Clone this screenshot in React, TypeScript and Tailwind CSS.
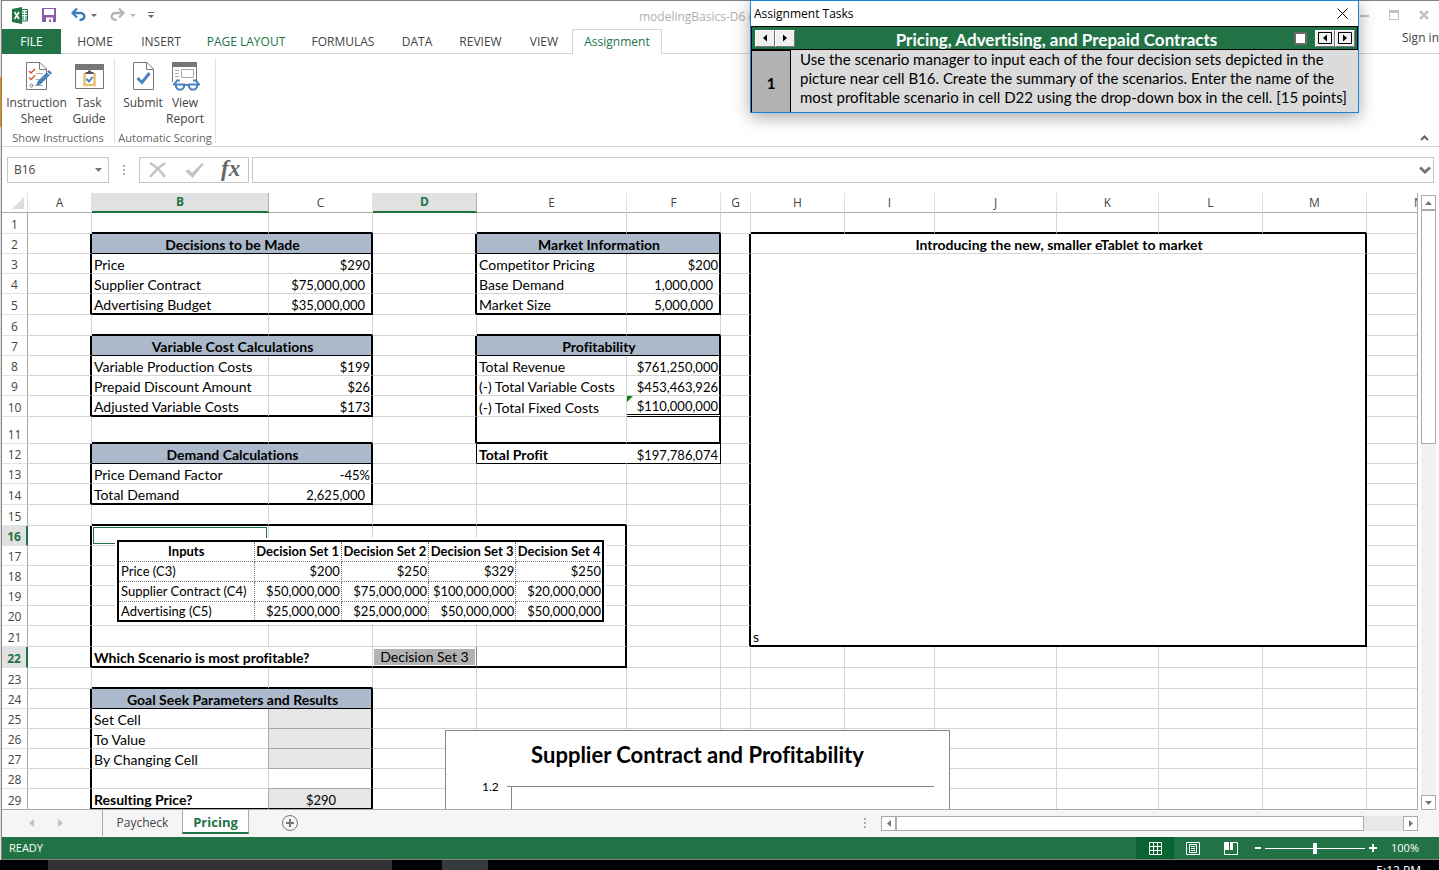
import { useState } from 'react';
import type { ReactNode } from 'react';
import { twMerge } from 'tailwind-merge';

type Cell = {
  text?: ReactNode;
  span?: number;
  rows?: number;
  cls?: string;
};

type Box = { top: number; bottom: number; left: string; right: string };

const COLUMNS = 'ABCDEFGHIJKLMN'.split('');

const COLUMN_WIDTHS = [
  'w-[26px]',
  'w-[64px]',
  'w-[177px]',
  'w-[104px]',
  'w-[104px]',
  'w-[150px]',
  'w-[94px]',
  'w-[30px]',
  'w-[94px]',
  'w-[90px]',
  'w-[122px]',
  'w-[102px]',
  'w-[104px]',
  'w-[104px]',
  '',
];

const SELECTED_COLUMNS = ['B', 'D'];
const SELECTED_ROWS = [16, 22];

// rows that are not the default 20px tall
const ROW_HEIGHTS: Record<number, string> = {
  1: 'h-[21px]',
  5: 'h-[21px]',
  6: 'h-[21px]',
  10: 'h-[21px]',
  11: 'h-[27px]',
  14: 'h-[21px]',
  15: 'h-[21px]',
  21: 'h-[21px]',
  22: 'h-[21px]',
  23: 'h-[21px]',
  29: 'h-[21px]',
};

const BOXES: Box[] = [
  { top: 2, bottom: 5, left: 'B', right: 'C' },
  { top: 7, bottom: 10, left: 'B', right: 'C' },
  { top: 12, bottom: 14, left: 'B', right: 'C' },
  { top: 24, bottom: 29, left: 'B', right: 'C' },
  { top: 2, bottom: 5, left: 'E', right: 'F' },
  { top: 7, bottom: 11, left: 'E', right: 'F' },
  { top: 2, bottom: 21, left: 'H', right: 'M' },
  { top: 16, bottom: 22, left: 'B', right: 'E' },
];

const heading = (text: string): Cell => ({
  text,
  span: 2,
  cls: 'bg-[#acb9ca] text-center font-bold border-b-black',
});
const num = (text: ReactNode): Cell => ({ text, cls: 'pr-px text-right text-[13px]' });
const accounting = (text: string): Cell => ({ text, cls: 'text-right text-[13px] pr-[6px]' });
const input = (text = ''): Cell => ({
  text,
  cls: 'bg-[#e7e6e6] text-center text-[13px] border-b-[#a6a6a6]',
});

const CELLS: Record<string, Cell> = {
  B2: heading('Decisions to be Made'),
  B3: { text: 'Price' },
  C3: num('$290'),
  B4: { text: 'Supplier Contract' },
  C4: accounting('$75,000,000'),
  B5: { text: 'Advertising Budget' },
  C5: accounting('$35,000,000'),
  B7: heading('Variable Cost Calculations'),
  B8: { text: 'Variable Production Costs' },
  C8: num('$199'),
  B9: { text: 'Prepaid Discount Amount' },
  C9: num('$26'),
  B10: { text: 'Adjusted Variable Costs' },
  C10: num('$173'),
  B12: heading('Demand Calculations'),
  B13: { text: 'Price Demand Factor' },
  C13: num('-45%'),
  B14: { text: 'Total Demand' },
  C14: accounting('2,625,000'),
  E2: heading('Market Information'),
  E3: { text: 'Competitor Pricing' },
  F3: num('$200'),
  E4: { text: 'Base Demand' },
  F4: accounting('1,000,000'),
  E5: { text: 'Market Size' },
  F5: accounting('5,000,000'),
  E7: heading('Profitability'),
  E8: { text: 'Total Revenue' },
  F8: num('$761,250,000'),
  E9: { text: '(-) Total Variable Costs' },
  F9: num('$453,463,926'),
  E10: { text: '(-) Total Fixed Costs' },
  F10: {
    text: (
      <>
        <span className="absolute left-0 top-0 border-r-[6px] border-t-[6px] border-r-transparent border-t-[#107c10]" />
        $110,000,000
      </>
    ),
    cls: 'relative pr-px text-right text-[13px] border-b-[3px] border-b-black [border-bottom-style:double]',
  },
  D12: { cls: 'border-r-black' },
  E12: { text: 'Total Profit', cls: 'font-bold border-r-white border-b-black' },
  F12: { text: '$197,786,074', cls: 'pr-[2px] text-right text-[13px] border-r-black border-b-black' },
  H2: {
    text: 'Introducing the new, smaller eTablet to market',
    span: 6,
    cls: 'text-center font-bold',
  },
  H3: { text: 's', span: 6, rows: 19 },
  B16: { text: <div className="m-px h-[17px] border border-[#217346]" />, cls: 'p-0' },
  B22: { text: 'Which Scenario is most profitable?', span: 2, cls: 'font-bold' },
  D22: {
    text: <div className="h-[18px] border border-white bg-[#b2b2b2] text-center">Decision Set 3</div>,
    cls: 'p-0 border-r-[#808080]',
  },
  B24: heading('Goal Seek Parameters and Results'),
  B25: { text: 'Set Cell', cls: 'border-r-[#a6a6a6]' },
  C25: input(),
  B26: { text: 'To Value', cls: 'border-r-[#a6a6a6]' },
  C26: input(),
  B27: { text: 'By Changing Cell', cls: 'border-r-[#a6a6a6]' },
  C27: input(),
  C28: { cls: 'border-b-[#a6a6a6]' },
  B29: { text: 'Resulting Price?', cls: 'font-bold border-r-[#a6a6a6]' },
  C29: input('$290'),
};

const SCENARIOS = [
  ['Price (C3)', '$200', '$250', '$329', '$250'],
  ['Supplier Contract (C4)', '$50,000,000', '$75,000,000', '$100,000,000', '$20,000,000'],
  ['Advertising (C5)', '$25,000,000', '$25,000,000', '$50,000,000', '$50,000,000'],
];

const RIBBON_TABS = [
  { label: 'HOME', width: 'w-[66px]' },
  { label: 'INSERT', width: 'w-[66px]' },
  { label: 'PAGE LAYOUT', width: 'w-[104px]' },
  { label: 'FORMULAS', width: 'w-[90px]' },
  { label: 'DATA', width: 'w-[58px]' },
  { label: 'REVIEW', width: 'w-[69px]' },
  { label: 'VIEW', width: 'w-[58px]' },
];

// medium borders sit on the right and bottom edges of the cells around a box
function boxBorders(row: number, lastRow: number, col: number, lastCol: number) {
  const classes: string[] = [];
  for (const box of BOXES) {
    const left = COLUMNS.indexOf(box.left);
    const right = COLUMNS.indexOf(box.right);
    if (row >= box.top && row <= box.bottom && (lastCol === right || lastCol === left - 1)) {
      classes.push('border-r-2 border-r-black');
    }
    if (col >= left && col <= right && (lastRow === box.bottom || lastRow === box.top - 1)) {
      classes.push('border-b-2 border-b-black');
    }
  }
  return classes.join(' ');
}

function SheetRow({ row }: { row: number }) {
  const cells: ReactNode[] = [];
  const selected = SELECTED_ROWS.includes(row);

  for (let col = 0; col < COLUMNS.length; col++) {
    // H3:M21 is one merged cell
    if (row > 3 && row <= 21 && col >= 7 && col <= 12) continue;
    const cell = CELLS[COLUMNS[col] + row] ?? {};
    const lastCol = col + (cell.span ?? 1) - 1;
    const lastRow = row + (cell.rows ?? 1) - 1;
    cells.push(
      <td
        key={col}
        colSpan={cell.span}
        rowSpan={cell.rows}
        className={twMerge(
          'overflow-hidden whitespace-nowrap border-b border-r border-[#d4d4d4] p-0 pl-[2px] align-bottom',
          cell.cls,
          boxBorders(row, lastRow, col, lastCol),
          row === 10 && col === 5 && 'border-b-[3px]',
        )}
      >
        {cell.text}
      </td>,
    );
    col = lastCol;
  }

  return (
    <tr className={ROW_HEIGHTS[row] ?? 'h-[20px]'}>
      <th
        scope="row"
        className={twMerge(
          "border-b border-r border-b-[#e3e3e3] border-r-[#ababab] p-0 text-center align-bottom font-['Open_Sans',sans-serif] text-[12px] font-normal text-[#444]",
          selected && 'border-r-2 border-r-[#217346] bg-[#e1e1e1] font-bold text-[#217346]',
        )}
      >
        {row}
      </th>
      {cells}
    </tr>
  );
}

function ScenarioPicture() {
  return (
    <div className="absolute left-[113px] top-[345px] w-[491px] bg-white p-[2px]">
      <table className="w-full table-fixed border-collapse border-2 border-black text-[13px] leading-4">
        <colgroup>
          <col className="w-[136px]" />
          <col span={4} />
        </colgroup>
        <thead>
          <tr className="h-[20px]">
            <th className="border border-dotted border-[#777] p-0 font-bold">Inputs</th>
            {[1, 2, 3, 4].map((n) => (
              <th key={n} className="whitespace-nowrap border border-dotted border-[#777] p-0 font-bold">
                Decision Set {n}
              </th>
            ))}
          </tr>
        </thead>
        <tbody>
          {SCENARIOS.map(([label, ...values]) => (
            <tr key={label} className="h-[20px]">
              <td className="whitespace-nowrap border border-dotted border-[#777] p-0 pl-[2px]">{label}</td>
              {values.map((value, i) => (
                <td key={i} className="whitespace-nowrap border border-dotted border-[#777] p-0 pr-px text-right">
                  {value}
                </td>
              ))}
            </tr>
          ))}
        </tbody>
      </table>
    </div>
  );
}

function ContractChart() {
  return (
    <div className="absolute left-[443px] top-[537px] h-[300px] w-[505px] border border-[#868686] bg-white">
      <h2 className="pt-[10px] text-center text-[22px] font-bold leading-7">Supplier Contract and Profitability</h2>
      <div className="flex pl-[36px] pt-[8px]">
        <span className="w-[23px] text-[12px] leading-5">1.2</span>
        <svg width="432" height="240" viewBox="0 0 432 240" fill="none" stroke="#868686">
          <path d="M2 9.5H429M6.5 9.5V240" />
        </svg>
      </div>
    </div>
  );
}

function Sheet() {
  return (
    <div className="flex min-h-0 flex-1">
      <div className="relative min-w-0 flex-1 overflow-hidden border-b border-r border-[#ababab]">
        <table className="w-full min-w-[1469px] table-fixed border-separate border-spacing-0 font-[Lato,sans-serif] text-[14px] leading-4 text-black">
          <colgroup>
            {COLUMN_WIDTHS.map((width, i) => (
              <col key={i} className={width} />
            ))}
          </colgroup>
          <thead>
            <tr className="h-[20px]">
              <th className="border-b border-r border-b-[#ababab] border-r-[#e1e1e1] p-0">
                <svg className="ml-[10px]" width="13" height="12" viewBox="0 0 13 12">
                  <path d="M12 0V12H0Z" fill="#dcdcdc" />
                </svg>
              </th>
              {COLUMNS.map((name) => (
                <th
                  key={name}
                  scope="col"
                  className={twMerge(
                    "border-b border-r border-b-[#ababab] border-r-[#e1e1e1] p-0 text-center font-['Open_Sans',sans-serif] text-[12px] font-normal text-[#444]",
                    SELECTED_COLUMNS.includes(name) &&
                      'border-b-2 border-b-[#217346] border-r-[#ababab] bg-[#e1e1e1] font-bold text-[#217346]',
                  )}
                >
                  {name}
                </th>
              ))}
            </tr>
          </thead>
          <tbody>
            {Array.from({ length: 29 }, (_, i) => (
              <SheetRow key={i} row={i + 1} />
            ))}
          </tbody>
        </table>
        <div className="font-[Lato,sans-serif] text-black">
          <ScenarioPicture />
          <ContractChart />
        </div>
      </div>

      {/* Vertical scroll bar */}
      <div className="flex w-[21px] flex-col pl-[3px] pr-[3px] pt-[2px]">
        <button aria-label="Scroll up" className="flex h-[15px] items-center justify-center border border-[#ababab]">
          <svg width="7" height="4" viewBox="0 0 7 4"><path d="M0 4L3.5 0L7 4Z" fill="#777" /></svg>
        </button>
        <div className="flex-1 bg-[#f1f1f1]">
          <div className="h-[40%] border border-[#ababab] bg-white" />
        </div>
        <button aria-label="Scroll down" className="flex h-[15px] items-center justify-center border border-[#ababab]">
          <svg width="7" height="4" viewBox="0 0 7 4"><path d="M0 0L3.5 4L7 0Z" fill="#777" /></svg>
        </button>
      </div>
    </div>
  );
}

function TitleBar() {
  return (
    <header className="flex h-[28px] items-center pl-[10px]">
      <svg width="17" height="17" viewBox="0 0 17 17">
        <path d="M9 2.5H15.5V14H9" fill="#fff" stroke="#217346" />
        <path d="M10 5H12M10 7.500H12M10 10H12M10 12H12M13 5H15M13 7.500H15M13 10H15M13 12H15" stroke="#217346" />
        <path d="M0 2L10 0V17L0 15Z" fill="#217346" />
        <path d="M2.500 5L7 12M7 5L2.500 12" stroke="#fff" strokeWidth="1.600" />
      </svg>
      <button aria-label="Save" className="ml-[13px]">
        <svg width="14" height="14" viewBox="0 0 14 14">
          <path d="M0 0H14V14H0Z" fill="#8a5bab" />
          <path d="M2 1H12V7H2ZM4 9.500H11V14H9V11.500H7V14H4Z" fill="#fff" />
        </svg>
      </button>
      <button aria-label="Undo" className="ml-[15px] flex items-center gap-[5px]">
        <svg width="15" height="14" viewBox="0 0 15 14" fill="none" stroke="#3c78b8">
          <path d="M2 5H9.500C15 5.500 14.500 12 8.500 12" strokeWidth="2.400" />
          <path d="M6 0.500L1.500 5L6 9.500" strokeWidth="2.200" />
        </svg>
        <svg width="6" height="3" viewBox="0 0 6 3"><path d="M0 0H6L3 3Z" fill="#666" /></svg>
      </button>
      <button aria-label="Redo" className="ml-[13px] flex items-center gap-[5px]">
        <svg width="15" height="14" viewBox="0 0 15 14" fill="none" stroke="#b5b5b5">
          <path d="M13 5H5.500C0 5.500 0.500 12 6.500 12" strokeWidth="2.400" />
          <path d="M9 0.500L13.500 5L9 9.500" strokeWidth="2.200" />
        </svg>
        <svg width="6" height="3" viewBox="0 0 6 3"><path d="M0 0H6L3 3Z" fill="#b5b5b5" /></svg>
      </button>
      <button aria-label="Customize Quick Access Toolbar" className="ml-[12px]">
        <svg width="6" height="6" viewBox="0 0 6 6"><path d="M0 0H6V1H0ZM0 3H6L3 6Z" fill="#666" /></svg>
      </button>
      <span className="ml-[485px] whitespace-nowrap pt-[3px] text-[12px] text-[#b0b0b0]">modelingBasics-D6 (</span>
      <div className="ml-auto flex items-center gap-[20px] pr-[10px]">
        <svg width="9" height="10" viewBox="0 0 9 10"><path d="M0 5H9V7H0Z" fill="#c3c3c3" /></svg>
        <svg width="10" height="10" viewBox="0 0 10 10"><path d="M0 0H10V10H0ZM1 3V9H9V3Z" fill="#c3c3c3" fillRule="evenodd" /></svg>
        <svg width="10" height="10" viewBox="0 0 10 10"><path d="M1 1L9 9M9 1L1 9" stroke="#c3c3c3" strokeWidth="2.500" /></svg>
      </div>
    </header>
  );
}

function RibbonTabs() {
  return (
    <nav className="flex h-[25px] text-[12px] text-[#444]">
      <button className="w-[59px] bg-[#217346] text-white">FILE</button>
      {RIBBON_TABS.map((tab) => (
        <button
          key={tab.label}
          className={twMerge(
            'whitespace-nowrap border-b border-[#d4d4d4] pl-[2px] pt-px',
            tab.width,
            tab.label === 'PAGE LAYOUT' && 'text-[#217346]',
          )}
        >
          {tab.label}
        </button>
      ))}
      <button className="w-[90px] border border-b-0 border-[#d4d4d4] text-[#217346]">Assignment</button>
      <a href="#" className="flex-1 whitespace-nowrap border-b border-[#d4d4d4] text-right">Sign in</a>
    </nav>
  );
}

function RibbonButton({ icon, lines, width }: { icon: ReactNode; lines: string[]; width: string }) {
  return (
    <button className={twMerge('flex flex-col items-center text-[12px] leading-4 text-[#444]', width)}>
      {icon}
      {lines.map((line) => (
        <span key={line} className="whitespace-nowrap">{line}</span>
      ))}
    </button>
  );
}

function InstructionIcon() {
  return (
    <svg className="mb-[3px]" width="32" height="32" viewBox="0 0 32 32" fill="none">
      <path d="M5.500 2.500H19L25.500 9V29.500H5.500Z" fill="#fff" stroke="#777" />
      <path d="M18.500 2.500V9.500H25.500" stroke="#777" />
      <path d="M8 11L10 13L14 9M8 17.500L10 19.500L14 15.500" stroke="#d65532" strokeWidth="1.500" />
      <path d="M15 13.500H22M15 19.500H19M14 25.500H22" stroke="#aaa" />
      <circle cx="10.500" cy="25.500" r="1.500" stroke="#777" />
      <path d="M15 26L16.500 21.500L28 10L31 13L19.500 24.500Z" fill="#4a82bd" />
      <path d="M26 12L29 15" stroke="#fff" />
    </svg>
  );
}

function TaskIcon() {
  return (
    <svg className="mb-[3px]" width="32" height="32" viewBox="0 0 32 32" fill="none">
      <path d="M2.500 4.500H30.500V28.500H2.500Z" fill="#fff" stroke="#777" />
      <path d="M2 4H31V10H2Z" fill="#777" />
      <path d="M11.500 13V25H21.500V13" stroke="#e6c073" strokeWidth="2.500" />
      <path d="M12.500 14V12H15V10.500H18V12H20.500V14Z" fill="#555" />
      <path d="M13.500 19L16 21.500L19.500 17" stroke="#4a82bd" strokeWidth="2" />
    </svg>
  );
}

function SubmitIcon() {
  return (
    <svg className="mb-[3px]" width="32" height="32" viewBox="0 0 32 32" fill="none">
      <path d="M6.500 2.500H20L26.500 9V29.500H6.500Z" fill="#fff" stroke="#777" />
      <path d="M19.500 2.500V9.500H26.500" stroke="#777" />
      <path d="M10.500 18L15 22.500L22.500 13" stroke="#4a82bd" strokeWidth="3" />
    </svg>
  );
}

function ReportIcon() {
  return (
    <svg className="mb-[3px]" width="32" height="32" viewBox="0 0 32 32" fill="none">
      <path d="M3.500 22V4.500H27.500V20" stroke="#777" />
      <path d="M3 2H28V7H3Z" fill="#777" />
      <path d="M6 10.500H10M6 13.500H10M6 16.500H10" stroke="#aaa" />
      <path d="M12.500 9.500H24.500V17.500H12.500Z" stroke="#aaa" />
      <path d="M7 24.500H15V27L13 29.500H9L7 27ZM20 24.500H28V27L26 29.500H22L20 27ZM15 25H20" fill="#fff" stroke="#4a82bd" strokeWidth="2" />
      <path d="M4 24.500H7M28 24.500H31M5 25L8 20.500H11M30 25L27 20.500H24" stroke="#4a82bd" strokeWidth="2" />
    </svg>
  );
}

function Ribbon() {
  return (
    <section className="flex h-[93px] border-b border-[#d4d4d4] pt-[4px]">
      <div className="flex h-[85px] w-[113px] flex-col border-r border-[#e1e1e1] pt-[2px]">
        <div className="flex pl-[3px]">
          <RibbonButton width="w-[63px]" icon={<InstructionIcon />} lines={['Instruction', 'Sheet']} />
          <RibbonButton width="w-[42px]" icon={<TaskIcon />} lines={['Task', 'Guide']} />
        </div>
        <p className="whitespace-nowrap pt-[3px] text-center text-[11px] leading-4 text-[#666]">Show Instructions</p>
      </div>
      <div className="flex h-[85px] w-[101px] flex-col border-r border-[#e1e1e1] pt-[2px]">
        <div className="flex pl-[7px]">
          <RibbonButton width="w-[42px]" icon={<SubmitIcon />} lines={['Submit']} />
          <RibbonButton width="w-[42px]" icon={<ReportIcon />} lines={['View', 'Report']} />
        </div>
        <p className="whitespace-nowrap pt-[3px] text-center text-[11px] leading-4 text-[#666]">Automatic Scoring</p>
      </div>
      <button aria-label="Collapse the ribbon" className="ml-auto self-end pb-[5px] pr-[10px]">
        <svg width="9" height="6" viewBox="0 0 9 6" fill="none">
          <path d="M1 5L4.500 1.500L8 5" stroke="#666" strokeWidth="2" />
        </svg>
      </button>
    </section>
  );
}

function FormulaBar() {
  return (
    <section className="flex h-[46px] items-center pl-[5px] pr-[5px]">
      <div className="flex h-[26px] w-[102px] items-center border border-[#c6c6c6] pr-[6px]">
        <input aria-label="Name box" defaultValue="B16" className="w-0 flex-1 pl-[6px] text-[12px] text-[#444] outline-none" />
        <svg width="7" height="4" viewBox="0 0 7 4"><path d="M0 0H7L3.500 4Z" fill="#777" /></svg>
      </div>
      <svg className="ml-[14px]" width="2" height="10" viewBox="0 0 2 10">
        <path d="M0 0H2V2H0ZM0 4H2V6H0ZM0 8H2V10H0Z" fill="#ababab" />
      </svg>
      <div className="ml-[14px] flex h-[26px] w-[110px] items-center border border-[#c6c6c6] pl-[9px]">
        <button aria-label="Cancel">
          <svg width="18" height="16" viewBox="0 0 18 16" fill="none" stroke="#c3c3c3">
            <path d="M1 1C6 4 12 9 16 15" strokeWidth="2.600" />
            <path d="M16 1C10 5 5 10 1 15" strokeWidth="2.200" />
          </svg>
        </button>
        <button aria-label="Enter" className="ml-[18px]">
          <svg width="20" height="16" viewBox="0 0 20 16">
            <path d="M0 9L4 7.500L7 11L17 1L19 2L7.500 16Z" fill="#c3c3c3" />
          </svg>
        </button>
        <button
          aria-label="Insert function"
          className="ml-[16px] pb-[2px] font-['Liberation_Serif',serif] text-[23px] font-bold italic leading-6 text-[#666]"
        >
          fx
        </button>
      </div>
      <div className="ml-[3px] flex h-[26px] flex-1 items-center border border-[#c6c6c6] pr-[2px]">
        <input aria-label="Formula" className="min-w-0 flex-1 px-1 text-[12px] outline-none" />
        <svg width="12" height="8" viewBox="0 0 12 8" fill="none">
          <path d="M1 1.500L6 6L11 1.500" stroke="#777" strokeWidth="3" />
        </svg>
      </div>
    </section>
  );
}

function TabStrip() {
  return (
    <nav className="flex h-[27px] bg-[#f5f5f5] pb-px text-[12px] text-[#444]">
      <div className="flex w-[101px] items-center gap-[24px] border-r border-[#ababab] pl-[27px]">
        <svg width="5" height="8" viewBox="0 0 5 8"><path d="M5 0V8L0 4Z" fill="#c3c3c3" /></svg>
        <svg width="5" height="8" viewBox="0 0 5 8"><path d="M0 0V8L5 4Z" fill="#c3c3c3" /></svg>
      </div>
      <button className="w-[79px]">Paycheck</button>
      <button className="h-[24px] w-[67px] border-x border-b-2 border-x-[#ababab] border-b-[#217346] bg-white pt-[3px] text-[13px] font-bold text-[#217346]">
        Pricing
      </button>
      <button aria-label="New sheet" className="ml-[32px]">
        <svg width="18" height="18" viewBox="0 0 18 18" fill="none" stroke="#777">
          <circle cx="9" cy="9" r="7.500" />
          <path d="M5 9H13M9 5V13" strokeWidth="2" />
        </svg>
      </button>
      <div className="ml-auto flex w-[575px] items-center pr-[21px]">
        <svg className="mr-[15px]" width="2" height="10" viewBox="0 0 2 10">
          <path d="M0 0H2V2H0ZM0 4H2V6H0ZM0 8H2V10H0Z" fill="#ababab" />
        </svg>
        <button aria-label="Scroll left" className="flex h-[15px] w-[15px] items-center justify-center border border-[#ababab] bg-white">
          <svg width="4" height="7" viewBox="0 0 4 7"><path d="M4 0V7L0 3.500Z" fill="#777" /></svg>
        </button>
        <div className="h-[15px] flex-1 bg-[#e8e8e8] pr-[39px]">
          <div className="h-full border border-[#ababab] bg-white" />
        </div>
        <button aria-label="Scroll right" className="flex h-[15px] w-[15px] items-center justify-center border border-[#ababab] bg-white">
          <svg width="4" height="7" viewBox="0 0 4 7"><path d="M0 0V7L4 3.500Z" fill="#777" /></svg>
        </button>
      </div>
    </nav>
  );
}

function StatusBar() {
  const [zoom, setZoom] = useState(100);

  return (
    <footer className="flex h-[23px] items-center border-b border-[#828282] bg-[#217346] text-[11px] text-white">
      <span className="pl-[7px]">READY</span>
      <div className="ml-auto flex h-full">
        <button aria-label="Normal view" className="flex w-[38px] items-center justify-center bg-[#0a6332]">
          <svg width="13" height="13" viewBox="0 0 13 13" fill="none" stroke="#fff">
            <path d="M0.500 0.500H12.500V12.500H0.500ZM4.500 0V13M8.500 0V13M0 4.500H13M0 8.500H13" />
          </svg>
        </button>
        <button aria-label="Page layout view" className="flex w-[38px] items-center justify-center">
          <svg width="14" height="13" viewBox="0 0 14 13" fill="none" stroke="#fff">
            <path d="M0.500 0.500H13.500V12.500H0.500ZM3.500 2.500H10.500V10.500H3.500ZM5 4.500H9M5 6.500H9M5 8.500H9" />
          </svg>
        </button>
        <button aria-label="Page break preview" className="flex w-[38px] items-center justify-center">
          <svg width="14" height="13" viewBox="0 0 14 13">
            <path d="M0 0H5V8H0ZM6 0H9V8H6Z" fill="#fff" />
            <path d="M0.500 8V12.500H13.500V0.500H9" fill="none" stroke="#fff" />
          </svg>
        </button>
      </div>
      <button aria-label="Zoom out" className="ml-[5px]">
        <svg width="6" height="8" viewBox="0 0 6 8"><path d="M0 3H6V5H0Z" fill="#fff" /></svg>
      </button>
      <input
        type="range"
        aria-label="Zoom"
        min={0}
        max={200}
        value={zoom}
        onChange={(e) => setZoom(Number(e.target.value))}
        className="ml-[4px] h-[12px] w-[100px] appearance-none bg-transparent [&::-webkit-slider-runnable-track]:h-px [&::-webkit-slider-runnable-track]:bg-white [&::-webkit-slider-thumb]:-mt-[5px] [&::-webkit-slider-thumb]:h-[11px] [&::-webkit-slider-thumb]:w-[4px] [&::-webkit-slider-thumb]:appearance-none [&::-webkit-slider-thumb]:bg-white"
      />
      <button aria-label="Zoom in" className="ml-[4px]">
        <svg width="8" height="8" viewBox="0 0 8 8"><path d="M0 3H8V5H0ZM3 0H5V8H3Z" fill="#fff" /></svg>
      </button>
      <span className="w-[62px] pr-[20px] text-right">{zoom}%</span>
    </footer>
  );
}

function ArrowButton({ label, left, boxed }: { label: string; left?: boolean; boxed?: boolean }) {
  return (
    <button
      aria-label={label}
      className="flex h-[17px] w-[20px] items-center justify-center border border-b-[#777] border-l-white border-r-[#777] border-t-white bg-[#f0f0f0]"
    >
      <svg width="14" height="12" viewBox="0 0 14 12">
        {boxed && <path d="M0.500 0.500H13.500V11.500H0.500Z" fill="none" stroke="#000" />}
        <path d={left ? 'M9 2.500V9.500L5 6Z' : 'M5 2.500V9.500L9 6Z'} fill="#000" />
      </svg>
    </button>
  );
}

function TaskPanel() {
  return (
    <aside className="absolute left-[750px] top-0 w-[609px] border border-[#1883d7] bg-white text-black shadow-[0_4px_16px_rgba(0,0,0,0.35)]">
      <div className="flex h-[25px] items-center justify-between pl-[3px] pr-[10px]">
        <h1 className="text-[12px]">Assignment Tasks</h1>
        <button aria-label="Close">
          <svg width="11" height="11" viewBox="0 0 11 11" stroke="#000">
            <path d="M0.500 0.500L10.500 10.500M10.500 0.500L0.500 10.500" />
          </svg>
        </button>
      </div>
      <div className="flex h-[24px] items-center border border-black bg-[#217346] pl-[3px] pr-[2px] font-[Lato,sans-serif]">
        <ArrowButton label="Previous task" left />
        <ArrowButton label="Next task" />
        <h2 className="flex-1 whitespace-nowrap pl-[24px] pt-[3px] text-center text-[17px] font-bold leading-5 text-white">
          Pricing, Advertising, and Prepaid Contracts
        </h2>
        <input
          type="checkbox"
          aria-label="Mark complete"
          className="mr-[8px] h-[13px] w-[13px] appearance-none border-2 border-[#696969] bg-white"
        />
        <ArrowButton label="Previous page" left boxed />
        <ArrowButton label="Next page" boxed />
      </div>
      <div className="flex font-[Lato,sans-serif] text-[15px] leading-[19px]">
        <div className="flex w-[40px] items-center justify-center border-x border-t border-black bg-[#b2b2b2] pt-[4px] font-bold">1</div>
        <p className="flex-1 whitespace-nowrap bg-[#dbdbdb] pb-[5px] pl-[9px]">
          Use the scenario manager to input each of the four decision sets depicted in the
          <br />
          picture near cell B16. Create the summary of the scenarios. Enter the name of the
          <br />
          most profitable scenario in cell D22 using the drop-down box in the cell. [15 points]
        </p>
      </div>
    </aside>
  );
}

export default function App() {
  return (
    <div className="relative flex h-screen flex-col overflow-hidden bg-white font-['Open_Sans',sans-serif] [font-variant-ligatures:none]">
      <div className="flex min-h-0 flex-1">
        <div className="w-px bg-[#e1e1e1] pt-[77px]">
          <div className="h-[50px] bg-[#f08a00]" />
        </div>
        <div className="flex min-w-0 flex-1 flex-col border-l border-t border-[#828282]">
          <TitleBar />
          <RibbonTabs />
          <Ribbon />
          <FormulaBar />
          <Sheet />
          <TabStrip />
          <StatusBar />
        </div>
      </div>

      {/* Taskbar */}
      <div className="flex h-[10px] overflow-hidden bg-[#000207] pl-[48px] text-[12px] leading-4 text-white">
        <div className="w-[344px] bg-[#333]" />
        <div className="ml-[50px] w-[46px] bg-[#363a3c]" />
        <span className="ml-auto pr-[18px] pt-[3px]">5:12 PM</span>
      </div>

      <TaskPanel />
    </div>
  );
}
